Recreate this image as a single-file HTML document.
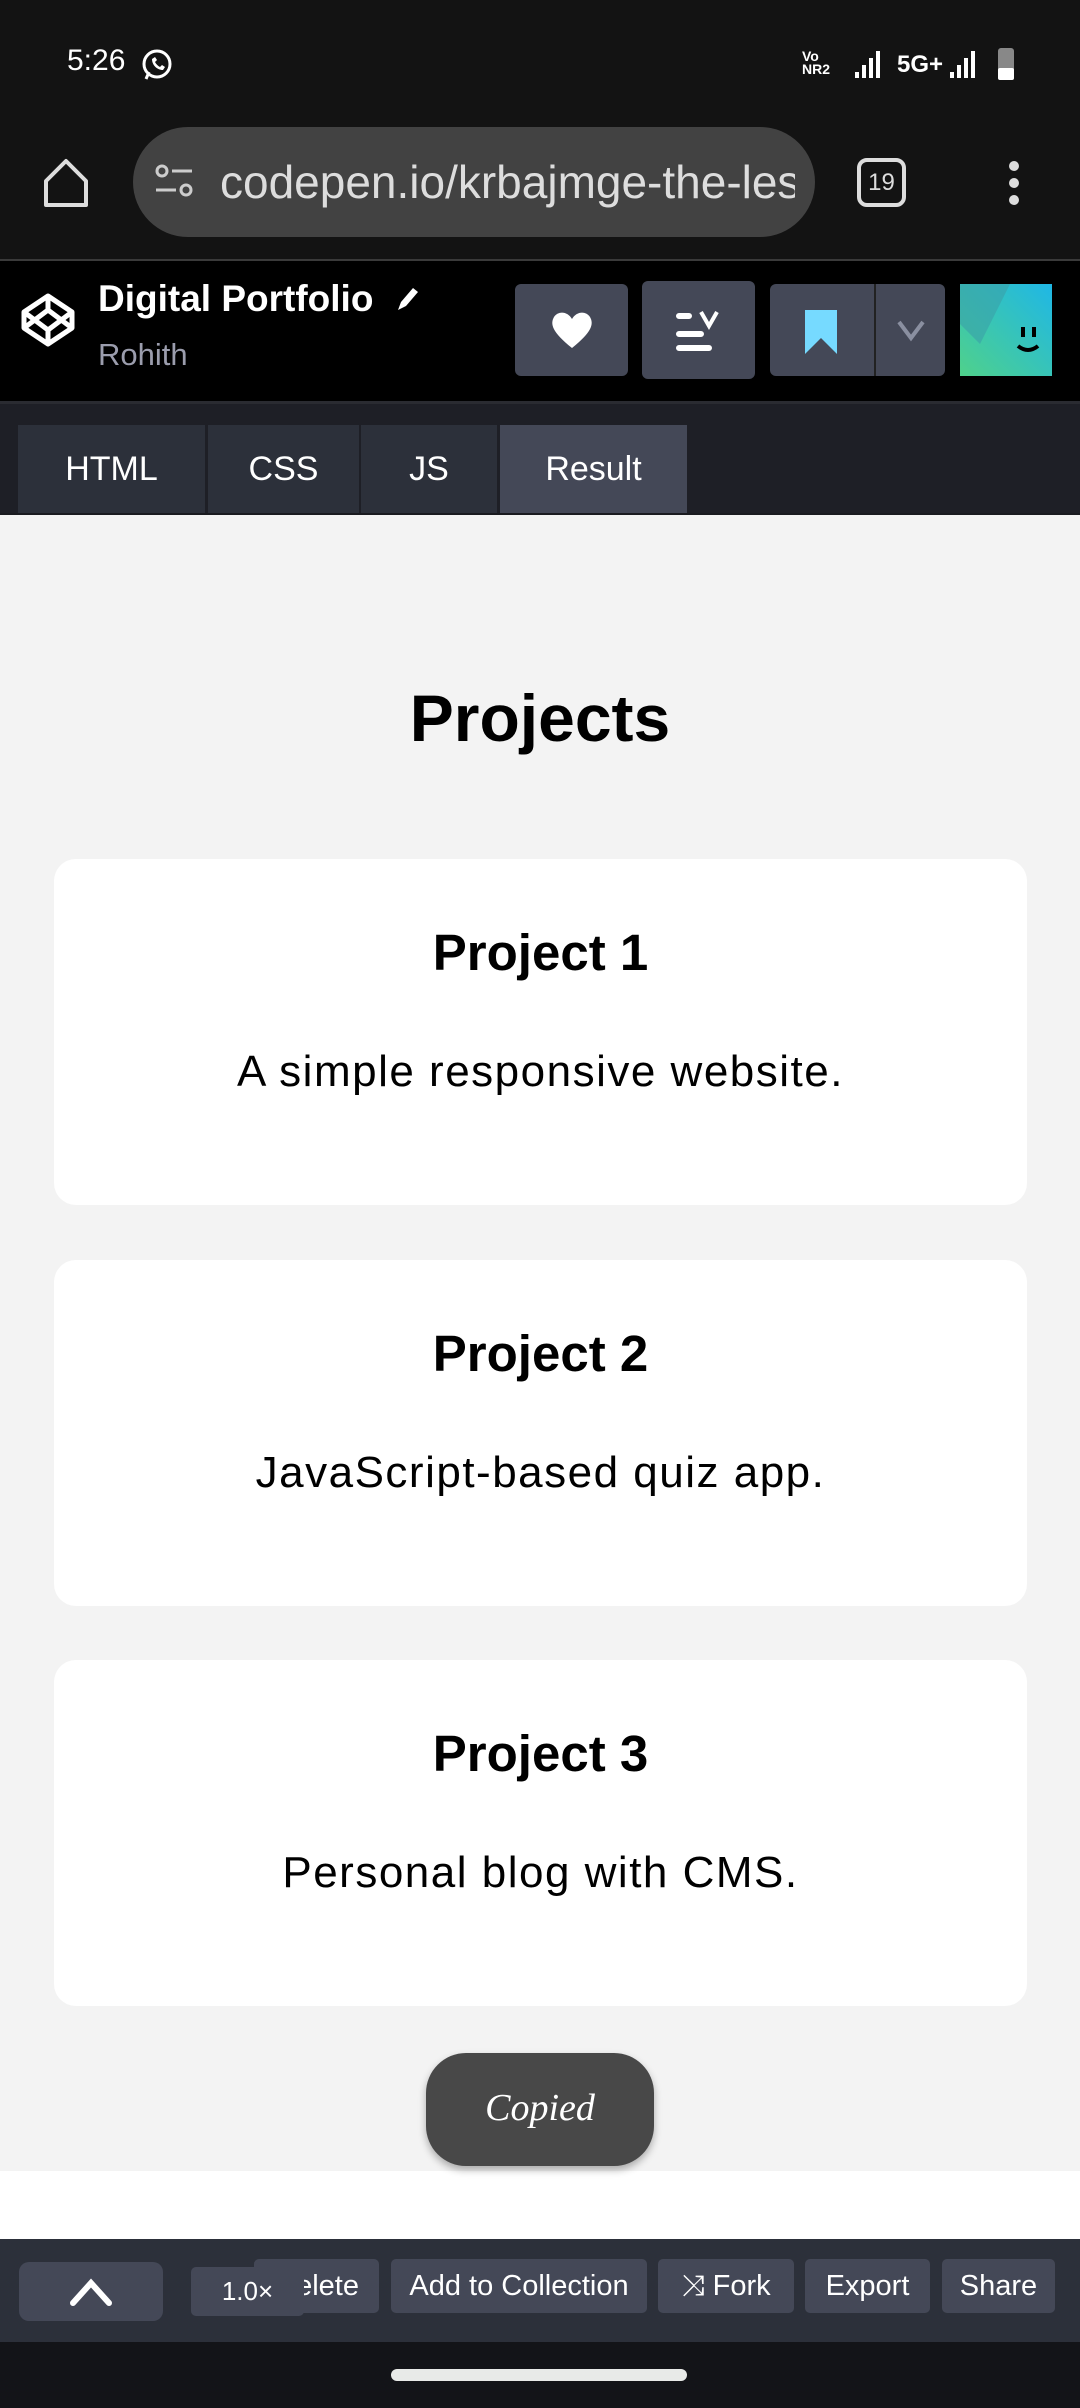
<!DOCTYPE html>
<html><head><meta charset="utf-8"><style>
*{margin:0;padding:0;box-sizing:border-box}
body{width:1080px;height:2408px;position:relative;overflow:hidden;background:#f3f3f3;font-family:"Liberation Sans",sans-serif}
.abs{position:absolute}
.status{left:0;top:0;width:1080px;height:259px;background:#131313}
.hdr{left:0;top:261px;width:1080px;height:140px;background:#000}
.tabsbar{left:0;top:401px;width:1080px;height:112px;background:#1e1f26;border-top:3px solid #2a2b31}
.tab{top:425px;height:88px;background:#2c303a;color:#fff;font-size:34px;display:flex;align-items:center;justify-content:center}
.btn{background:#444857;border-radius:6px}
.card{left:54px;width:973px;height:346px;background:#fff;border-radius:22px;text-align:center}
.card h2{position:absolute;left:0;right:0;top:64px;font-size:51px;font-weight:bold;color:#000}
.card p{position:absolute;left:0;right:0;top:188px;font-size:44px;color:#000;letter-spacing:1.5px}
.bb{top:2259px;height:54px;background:#444857;border-radius:5px;color:#fff;font-size:29px;display:flex;align-items:center;justify-content:center}
</style></head><body>
<div class="abs status"></div>
<div class="abs" style="left:0;top:259px;width:1080px;height:2px;background:#3a3a3a"></div>
<div class="abs" style="left:67px;top:44px;color:#fff;font-size:30px">5:26</div>
<svg class="abs" style="left:140px;top:48px" width="34" height="34" viewBox="0 0 34 34"><circle cx="17" cy="16" r="13" fill="none" stroke="#fff" stroke-width="3"/><path d="M6 31l3-7" stroke="#fff" stroke-width="3"/><path d="M12 11c0 6 5 11 11 11l2-3-3-2-2 2c-2-1-4-3-5-5l2-2-2-3z" fill="#fff"/></svg>
<div class="abs" style="left:802px;top:50px;color:#fff;font-size:14px;font-weight:bold;line-height:13px">Vo<br>NR2</div>
<svg class="abs" style="left:855px;top:46px" width="160" height="36"><rect x="0" y="26" width="4" height="6" fill="#fff"/><rect x="7" y="19" width="4" height="13" fill="#fff"/><rect x="14" y="12" width="4" height="20" fill="#fff"/><rect x="21" y="5" width="4" height="27" fill="#fff"/><text x="42" y="26" fill="#fff" font-size="24" font-family="Liberation Sans" font-weight="bold">5G+</text><rect x="95" y="26" width="4" height="6" fill="#fff"/><rect x="102" y="19" width="4" height="13" fill="#fff"/><rect x="109" y="12" width="4" height="20" fill="#fff"/><rect x="116" y="5" width="4" height="27" fill="#fff"/><rect x="143" y="2" width="16" height="32" rx="3" fill="#888"/><rect x="143" y="22" width="16" height="12" rx="2" fill="#fff"/></svg>
<svg class="abs" style="left:38px;top:155px" width="56" height="56" viewBox="0 0 56 56"><path d="M8 26L28 6l20 20v24H8z" fill="none" stroke="#ddd" stroke-width="4" stroke-linejoin="round"/></svg>
<div class="abs" style="left:133px;top:127px;width:682px;height:110px;background:#424242;border-radius:55px"></div>
<svg class="abs" style="left:152px;top:162px" width="46" height="40"><circle cx="10" cy="9" r="5" fill="none" stroke="#ccc" stroke-width="3"/><path d="M20 9h20M4 28h20" stroke="#ccc" stroke-width="3"/><circle cx="34" cy="28" r="5" fill="none" stroke="#ccc" stroke-width="3"/></svg>
<div class="abs" style="left:220px;top:155px;width:575px;overflow:hidden;white-space:nowrap;color:#ddd;font-size:46px">codepen.io/krbajmge-the-less</div>
<div class="abs" style="left:857px;top:158px;width:49px;height:49px;border:4px solid #ddd;border-radius:10px;color:#ddd;font-size:24px;text-align:center;line-height:42px">19</div>
<svg class="abs" style="left:1000px;top:158px" width="28" height="50"><circle cx="14" cy="8" r="5" fill="#ddd"/><circle cx="14" cy="25" r="5" fill="#ddd"/><circle cx="14" cy="42" r="5" fill="#ddd"/></svg>
<div class="abs hdr"></div>
<svg class="abs" style="left:20px;top:292px" width="56" height="56" viewBox="0 0 56 56" fill="none" stroke="#fff" stroke-width="5" stroke-linejoin="round"><path d="M28 4L52 20v16L28 52 4 36V20z"/><path d="M28 4v14M28 38v14M4 20l24 18 24-18M4 36l24-18 24 18"/></svg>
<div class="abs" style="left:98px;top:278px;color:#fff;font-size:37px;font-weight:bold">Digital Portfolio</div>
<svg class="abs" style="left:392px;top:284px" width="30" height="30"><path d="M6 26l3-8 12-14 5 4-12 14z" fill="#fff"/></svg>
<div class="abs" style="left:98px;top:337px;color:#9b9dad;font-size:31px">Rohith</div>
<div class="abs btn" style="left:515px;top:284px;width:113px;height:92px"></div>
<svg class="abs" style="left:550px;top:310px" width="44" height="40" viewBox="0 0 44 40"><path d="M22 38C2 22 0 14 4 7c5-7 14-5 18 2 4-7 13-9 18-2 4 7 2 15-18 31z" fill="#fff"/></svg>
<div class="abs btn" style="left:642px;top:281px;width:113px;height:98px"></div>
<svg class="abs" style="left:675px;top:308px" width="50" height="46"><path d="M4 8h10M4 26h22M4 40h30" stroke="#fff" stroke-width="6" stroke-linecap="round"/><path d="M26 4l8 14 8-14" stroke="#fff" stroke-width="4" fill="none"/></svg>
<div class="abs btn" style="left:770px;top:284px;width:175px;height:92px"></div>
<div class="abs" style="left:874px;top:284px;width:2px;height:92px;background:#222"></div>
<svg class="abs" style="left:803px;top:308px" width="36" height="46"><path d="M2 2h32v44L18 30 2 46z" fill="#76daff"/></svg>
<svg class="abs" style="left:896px;top:318px" width="30" height="24"><path d="M3 4l12 16 12-16" stroke="#8a8fa0" stroke-width="4" fill="none"/></svg>
<svg class="abs" style="left:960px;top:284px" width="92" height="92" viewBox="0 0 92 92"><defs><linearGradient id="g" x1="0" y1="1" x2="1" y2="0"><stop offset="0" stop-color="#4fd18b"/><stop offset="1" stop-color="#1fb7e6"/></linearGradient></defs><rect width="92" height="92" fill="url(#g)"/><path d="M0 0h50L20 60 0 40z" fill="#3aa0a8" opacity=".6"/><rect x="61" y="43" width="4" height="10" fill="#000"/><rect x="72" y="43" width="4" height="10" fill="#000"/><path d="M58 62q10 8 20 0" stroke="#000" stroke-width="4" fill="none"/></svg>
<div class="abs tabsbar"></div>
<div class="abs tab" style="left:18px;width:187px">HTML</div>
<div class="abs tab" style="left:208px;width:151px">CSS</div>
<div class="abs tab" style="left:361px;width:136px">JS</div>
<div class="abs tab" style="left:500px;width:187px;background:#444857">Result</div>
<div class="abs" style="left:0;top:513px;width:1080px;height:2px;background:#1a1b20"></div>
<div class="abs" style="left:0;top:680px;width:1080px;text-align:center;font-size:66px;font-weight:bold;color:#000">Projects</div>
<div class="abs card" style="top:859px"><h2>Project 1</h2><p>A simple responsive website.</p></div>
<div class="abs card" style="top:1260px"><h2>Project 2</h2><p>JavaScript-based quiz app.</p></div>
<div class="abs card" style="top:1660px"><h2>Project 3</h2><p>Personal blog with CMS.</p></div>
<div class="abs" style="left:0;top:2171px;width:1080px;height:68px;background:#fff"></div>
<div class="abs" style="left:426px;top:2053px;width:228px;height:113px;background:#484848;border-radius:40px;box-shadow:0 4px 8px rgba(0,0,0,.3);color:#fff;font-size:38px;font-family:'Liberation Serif',serif;font-style:italic;text-align:center;line-height:110px">Copied</div>
<div class="abs" style="left:0;top:2239px;width:1080px;height:103px;background:#2c303a"></div>
<div class="abs bb" style="left:19px;top:2262px;width:144px;height:59px;border-radius:10px"><svg width="44" height="30"><path d="M4 26L22 6l18 20" stroke="#fff" stroke-width="6" fill="none" stroke-linecap="round"/></svg></div>
<div class="abs bb" style="left:254px;width:125px;justify-content:flex-end;padding-right:20px">elete</div>
<div class="abs bb" style="left:191px;top:2267px;width:113px;height:49px;font-size:26px">1.0×</div>
<div class="abs bb" style="left:391px;width:256px">Add to Collection</div>
<div class="abs bb" style="left:658px;width:136px">⤨ Fork</div>
<div class="abs bb" style="left:805px;width:125px">Export</div>
<div class="abs bb" style="left:942px;width:113px">Share</div>
<div class="abs" style="left:0;top:2342px;width:1080px;height:66px;background:#131418"></div>
<div class="abs" style="left:391px;top:2369px;width:296px;height:12px;background:#e8eae8;border-radius:6px"></div>
</body></html>
